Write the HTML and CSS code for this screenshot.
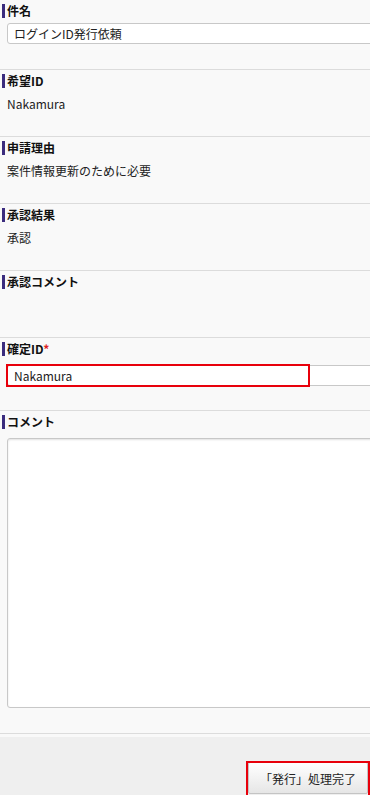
FILE: index.html
```html
<!DOCTYPE html>
<html lang="ja">
<head>
<meta charset="utf-8">
<title>ログインID発行依頼</title>
<link rel="stylesheet" href="styles.css">
</head>
<body>
<div class="page">
    <div class="field field-first">
        <div class="label">件名</div>
        <input class="text-input" type="text" value="ログインID発行依頼">
    </div>
    <div class="field">
        <div class="label">希望ID</div>
        <div class="value">Nakamura</div>
    </div>
    <div class="field">
        <div class="label">申請理由</div>
        <div class="value">案件情報更新のために必要</div>
    </div>
    <div class="field">
        <div class="label">承認結果</div>
        <div class="value">承認</div>
    </div>
    <div class="field">
        <div class="label">承認コメント</div>
    </div>
    <div class="field field-input">
        <div class="label">確定ID<span class="required">*</span></div>
        <div class="input-wrap">
            <input class="text-input" type="text" value="Nakamura">
            <div class="highlight highlight-input"></div>
        </div>
    </div>
    <div class="field field-comment">
        <div class="label">コメント</div>
        <textarea class="comment-box"></textarea>
    </div>
    <div class="footer">
        <div class="button-wrap">
            <button class="done-button" type="button">「発行」処理完了</button>
            <div class="highlight highlight-button"></div>
        </div>
    </div>
</div>
</body>
</html>
```

FILE: styles.css
```css
body {
    margin: 0;
    background-color: #f9f9f9;
    font-family: "Noto Sans CJK JP", "Noto Sans", sans-serif;
    font-size: 12px;
    color: #222;
    overflow: hidden;
}

.page {
    width: 370px;
    overflow: hidden;
}

.field {
    height: 62px;
    padding-top: 4px;
    border-bottom: 1px solid #dcdcdc;
}

.field-first {
    height: 65px;
}

.field-input {
    height: 68px;
}

.field-comment {
    height: 318px;
}

.label {
    border-left: 3px solid #3b2c7e;
    padding-left: 2px;
    margin-left: 2px;
    height: 14px;
    line-height: 14px;
    font-weight: bold;
    color: #111;
}

.required {
    color: #d22;
}

.value {
    margin: 6px 0 0 7px;
    line-height: 20px;
}

.text-input {
    display: block;
    box-sizing: border-box;
    width: 383px;
    height: 21px;
    margin: 5px 0 0 7px;
    padding: 0 6px;
    border: 1px solid #c8c8c8;
    border-radius: 3px;
    background-color: #fff;
    font-family: inherit;
    font-size: 12px;
    color: #222;
}

.input-wrap {
    position: relative;
    margin-top: 9px;
}

.input-wrap .text-input {
    margin-top: 0;
    height: 21px;
}

.highlight {
    position: absolute;
    border: 2px solid #e8000b;
    pointer-events: none;
}

.highlight-input {
    left: 6px;
    top: -1px;
    width: 300px;
    height: 19px;
}

.comment-box {
    display: block;
    box-sizing: border-box;
    width: 383px;
    height: 270px;
    margin: 9px 0 0 7px;
    border: 1px solid #c8c8c8;
    border-radius: 3px;
    box-shadow: inset 0 1px 2px rgba(0,0,0,0.12);
    background-color: #fff;
    resize: none;
}

.footer {
    margin-top: 3px;
    height: 70px;
    background-color: #efefef;
    padding-top: 25px;
}

.button-wrap {
    position: relative;
    margin-left: 248px;
    width: 120px;
}

.done-button {
    display: block;
    width: 120px;
    height: 32px;
    border: 1px solid #c4c4c4;
    border-radius: 2px;
    background: linear-gradient(#ffffff, #e6e6e6);
    font-family: inherit;
    font-size: 12px;
    color: #222;
    padding: 0;
}

.highlight-button {
    left: -2px;
    top: -1px;
    width: 120px;
    height: 34px;
}
```
